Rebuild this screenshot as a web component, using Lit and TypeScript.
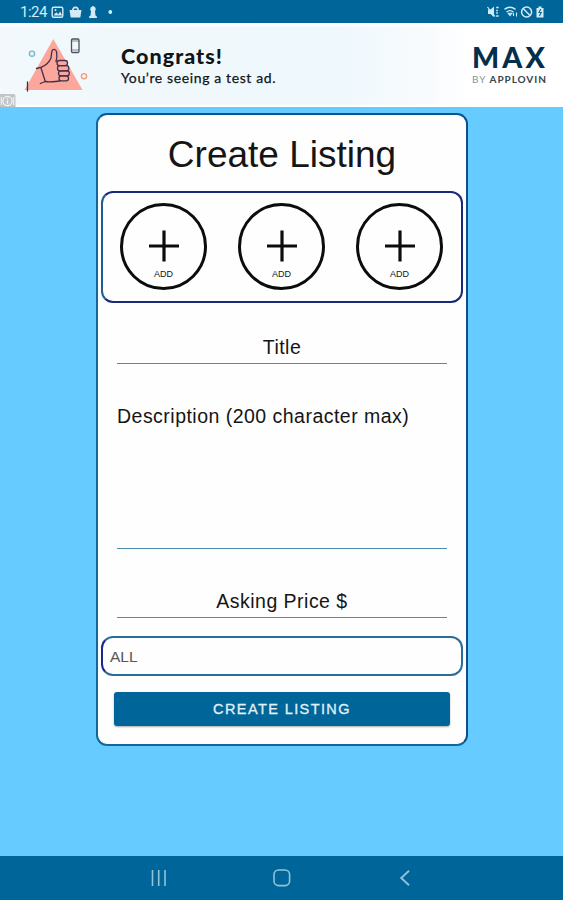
import { LitElement, html, css } from "lit";
import { customElement } from "lit/decorators.js";

@customElement("status-bar")
class StatusBar extends LitElement {
  static styles = css`
    :host { display: flex; height: 23px; box-sizing: border-box; background: #006699; color: #d3ebf5; padding: 0 17px 0 20px; align-items: center; justify-content: space-between; font: 15px/23px Roboto, sans-serif; }
    .left, .right { display: flex; align-items: center; height: 23px; }
    .time { width: 31px; letter-spacing: -0.5px; padding-top: 2px; }
    svg { display: block; }
  `;
  render() {
    return html`
      <div class="left">
        <span class="time">1:24</span>
        <svg width="64" height="23" viewBox="51 0 64 23" fill="none" stroke="#d3ebf5">
          <rect x="52.2" y="7.2" width="10.6" height="10" rx="1.5" stroke-width="1.4" />
          <path d="M53.5 15.5l2.7-3.2 2 2 2-2.7 2 3.9z" fill="#d3ebf5" stroke="none" />
          <circle cx="55.5" cy="10" r="1" fill="#d3ebf5" stroke="none" />
          <path d="M69.5 10h12l-1.2 7.5h-9.6z" fill="#d3ebf5" stroke="none" />
          <path d="M72.7 11.5c0-5.5 5.6-5.5 5.6 0" stroke-width="1.6" />
          <path d="M93 6a3.2 3.2 0 0 1 2 5.2l.5 4.3 1.4 1v1.5h-7.8v-1.5l1.4-1 .5-4.3A3.2 3.2 0 0 1 93 6z" fill="#d3ebf5" stroke="none" />
          <circle cx="110.3" cy="12" r="1.9" fill="#d3ebf5" stroke="none" />
        </svg>
      </div>
      <div class="right">
        <svg width="60" height="23" viewBox="486 0 60 23" fill="none" stroke="#d3ebf5">
          <path d="M488 9.5h2.5l3.5-3v10.5l-3.5-3H488z" fill="#d3ebf5" stroke="none" />
          <path d="M487.5 7l7.5 9.5" stroke-width="1.2" />
          <path d="M496.2 7.5h2.4M496.2 10.5h1.6M496.2 13h1.6M496.2 16h2.4" stroke-width="1.3" />
          <path d="M504.5 9.4c3.4-2.6 7.5-2.6 11 0M506.5 12c2.2-1.7 4.8-1.7 7 0" stroke-width="1.4" />
          <path d="M508.2 13.2h3.6l-1.8 2.4zM513.5 16v-3M516.5 12.5v4" stroke-width="1.1" />
          <circle cx="526.6" cy="12" r="5" stroke-width="1.5" />
          <path d="M523.2 8.5l6.8 7" stroke-width="1.4" />
          <path d="M536.5 8h2V6.5h3V8h2v9.5h-7z" fill="#d3ebf5" stroke="none" />
          <path d="M540.8 9l-1.8 3.5h2.2L539.4 16" stroke="#006699" stroke-width="1.1" />
        </svg>
      </div>`;
  }
}

@customElement("ad-banner")
class AdBanner extends LitElement {
  static styles = css`
    :host { display: flex; height: 84px; background: linear-gradient(90deg, #f2f8fc 0, #eff8fd 60%, #f8fbfe 76%, #fff 83%); box-shadow: inset 0 4px 3px -1px #fff, inset 0 -3px 3px -1px #fff; font-family: Lato, sans-serif; }
    .art { flex: 0 0 121px; display: block; }
    .copy { flex: 1; padding-top: 21px; color: #10151a; }
    .head { font-size: 21.5px; line-height: 25px; font-weight: 900; letter-spacing: 1.05px; }
    .sub { font-size: 14px; line-height: 17px; font-weight: 400; letter-spacing: 0.62px; -webkit-text-stroke: 0.25px #10151a; }
    .brand { width: 91px; padding-top: 18px; color: #032f4c; white-space: nowrap; }
    .max { font-size: 28.5px; line-height: 32px; height: 31px; font-weight: 900; letter-spacing: 3.2px; }
    .by { font-size: 10px; line-height: 12px; height: 12px; padding-top: 0.5px; letter-spacing: 0.95px; color: #87919a; }
    .by b { color: #3a434b; }
  `;
  render() {
    return html`
      <svg class="art" width="121" height="84" viewBox="0 23 121 84" fill="none">
        <path d="M53.3 39L82.5 90H24.5z" fill="#fba79b" />
        <g stroke="#432f4c" stroke-width="1.3" stroke-linejoin="round" stroke-linecap="round">
          <path d="M27.5 91v-9" />
          <path d="M36.5 68.5l5-1.3M41 68l4.3 13.5-5 2M41.5 67.2c4.5-2 8-5.4 9.5-9.2l.8-6.5c.6-3 4.2-2.6 4.8.6.6 3.4.4 6.4-.6 9.6" />
          <path d="M45.3 81.5c4 .8 8 .2 14.5-.5" />
          <rect x="57" y="60.5" width="10.5" height="5.2" rx="2.4" />
          <rect x="57.5" y="65.7" width="11.3" height="5.2" rx="2.4" />
          <rect x="58.5" y="70.9" width="10.8" height="5" rx="2.4" />
          <rect x="59" y="75.9" width="9.5" height="5" rx="2.4" />
        </g>
        <rect x="71.5" y="39" width="7.5" height="13.5" rx="1.2" stroke="#48545e" stroke-width="1.3" />
        <path d="M71.5 41h7.5M71.5 50h7.5" stroke="#48545e" stroke-width="0.7" />
        <circle cx="32" cy="53.7" r="2.6" stroke="#73bec8" stroke-width="1.4" />
        <circle cx="84" cy="76.2" r="2.6" stroke="#ee9d84" stroke-width="1.4" />
        <path d="M0 94h13.5q2 0 2 2v11H0z" fill="#c2c5c8" />
        <circle cx="7.5" cy="101" r="4.6" stroke="#f4f6f7" stroke-width="1.2" />
        <path d="M7.5 98v1.2M7.5 100.3v3.5" stroke="#f4f6f7" stroke-width="1.4" />
        <path d="M1.3 97v8M13.7 97v8" stroke="#f4f6f7" />
      </svg>
      <div class="copy">
        <div class="head">Congrats!</div>
        <div class="sub">You’re seeing a test ad.</div>
      </div>
      <div class="brand">
        <div class="max">MAX</div>
        <div class="by">BY <b>APPLOVIN</b></div>
      </div>`;
  }
}

@customElement("listing-form")
class ListingForm extends LitElement {
  static styles = css`
    :host { display: flex; flex-direction: column; box-sizing: border-box; width: 372px; height: 633px; margin: 6px 0 0 96px; padding: 0 4px; border: 2px solid #13679a; border-top-color: #0b5590; border-right-color: #0b4f8c; border-radius: 11px; background: #fefefe; color: #151515; font-family: "Liberation Sans", Arial, sans-serif; }
    h1 { margin: 0; height: 76px; font-size: 37px; line-height: 79px; font-weight: 400; text-align: center; flex: none; }
    .photos { display: flex; justify-content: space-between; align-items: center; box-sizing: border-box; height: 112px; margin: 0 -1px; padding: 0 18px 1px 17px; border: 2px solid #19297a; border-left-color: #225c91; border-radius: 12px; flex: none; }
    .add { display: flex; flex-direction: column; align-items: center; box-sizing: border-box; width: 87px; height: 87px; border: 3px solid #0c0c0c; border-radius: 50%; padding-top: 24px; font-size: 9px; line-height: 10px; }
    .add svg { display: block; margin-bottom: 7px; flex: none; }
    .field { box-sizing: border-box; width: 330px; margin-left: 15px; border-bottom: 1.5px solid #4b8fb0; font-size: 19.5px; line-height: 24px; letter-spacing: 0.48px; flex: none; }
    .title { height: 61px; padding-top: 32px; text-align: center; }
    .description { height: 185px; padding-top: 40px; }
    .price { height: 69px; padding-top: 40px; text-align: center; }
    .category { box-sizing: border-box; height: 40px; margin: 18px -1px 0 -1px; border: 2px solid #2a6d9a; border-left-color: #17298a; border-radius: 12px; padding-left: 7px; font-size: 15.5px; line-height: 37px; color: #555; flex: none; }
    .submit { height: 34px; margin: 16px 12px 0; border: 0; border-radius: 3px; padding: 0; background: #006699; color: #e2f1f7; font: 14.5px/34px "Liberation Sans", Arial, sans-serif; letter-spacing: 1.4px; -webkit-text-stroke: 0.3px #e2f1f7; box-shadow: 0 1px 2px #0005; flex: none; }
  `;
  render() {
    return html`
      <h1>Create Listing</h1>
      <div class="photos">
        ${[0, 1, 2].map(() => html`<div class="add">
          <svg width="32" height="32" viewBox="0 0 32 32"><path d="M1 16h30M16 0.5v31" stroke="#0c0c0c" stroke-width="3.2" /></svg>
          ADD
        </div>`)}
      </div>
      <div class="field title">Title</div>
      <div class="field description">Description (200 character max)</div>
      <div class="field price">Asking Price $</div>
      <div class="category">ALL</div>
      <button class="submit">CREATE LISTING</button>`;
  }
}

@customElement("nav-bar")
class NavBar extends LitElement {
  static styles = css`
    :host { display: flex; justify-content: center; height: 44px; background: #006699; }
    svg { display: block; }
  `;
  render() {
    return html`<svg width="300" height="44" viewBox="132 856 300 44" fill="none" stroke="#8fc3dc" stroke-width="1.6">
      <path d="M152.5 870v16M158.7 870v16M165 870v16" />
      <rect x="274" y="870" width="15.6" height="15.6" rx="4.6" />
      <path d="M409 870.8l-7.8 7.2 7.8 7.3" stroke-width="1.9" />
    </svg>`;
  }
}

@customElement("app-root")
class AppRoot extends LitElement {
  static styles = css`
    :host { display: flex; flex-direction: column; width: 563px; height: 900px; overflow: hidden; background: #66ccff; }
    nav-bar { margin-top: auto; }
  `;
  render() {
    return html`<status-bar></status-bar><ad-banner></ad-banner><listing-form></listing-form><nav-bar></nav-bar>`;
  }
}
